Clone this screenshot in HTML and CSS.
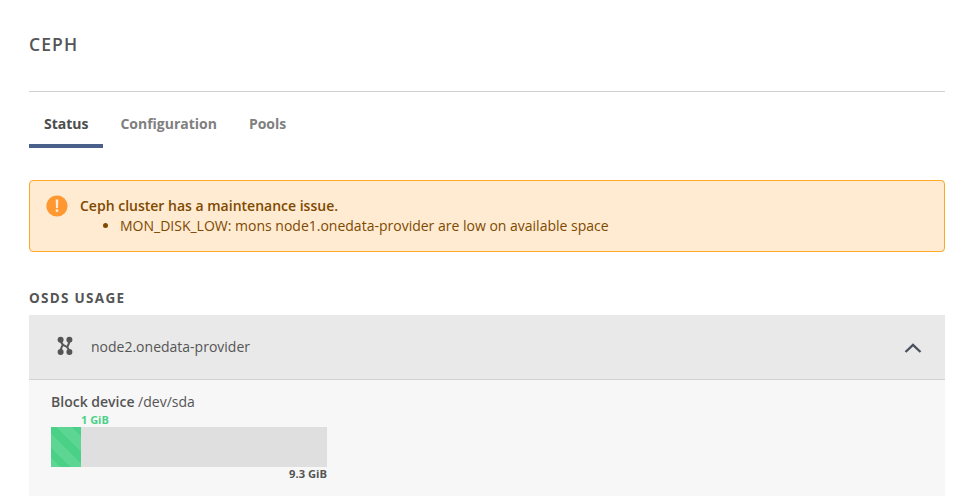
FILE: index.html
```html
<!DOCTYPE html>
<html lang="en">
<head>
<meta charset="utf-8">
<title>Ceph</title>
<link rel="stylesheet" href="styles.css">
</head>
<body>
<main class="page">
  <header class="page-header"><h1>Ceph</h1></header>
  <nav class="tabs">
    <a class="tab active">Status</a>
    <a class="tab">Configuration</a>
    <a class="tab">Pools</a>
  </nav>
  <section class="alert">
    <svg class="alert-icon" viewBox="0 0 22 22"><circle cx="11" cy="11" r="10.6" fill="#ff9830"/><path d="M9.7 4.500h2.600l-.3 8.500h-2z" fill="#feebd2"/><circle cx="11" cy="15.7" r="1.4" fill="#feebd2"/></svg>
    <div class="alert-body">
      <strong>Ceph cluster has a maintenance issue.</strong>
      <ul><li>MON_DISK_LOW: mons node1.onedata-provider are low on available space</li></ul>
    </div>
  </section>
  <h2>OSDs usage</h2>
  <section class="node">
    <header class="node-header">
      <svg class="node-icon" viewBox="0 0 16 20"><g fill="#555"><circle cx="3.6" cy="3.800" r="3"/><circle cx="12.4" cy="3.800" r="3"/><circle cx="3.6" cy="16" r="3"/><circle cx="12.4" cy="16" r="3"/></g><path d="M3.600 4Q4.400 8.600 8 9.900T12.400 16M12.400 4Q12.400 8 10.300 10.800M3.600 16Q3.600 12 5.700 9" fill="none" stroke="#555" stroke-width="2"/></svg>
      <span class="node-name">node2.onedata-provider</span>
      <svg class="chevron" viewBox="0 0 18 12"><path d="M1.5 10 9 2.800l7.500 7.200" fill="none" stroke="#4c505c" stroke-width="2.300"/></svg>
    </header>
    <div class="node-body">
      <div class="device"><b>Block device</b> /dev/sda</div>
      <div class="usage">
        <div class="used-label">1 GiB</div>
        <div class="bar"><div class="used"></div></div>
        <div class="total-label">9.3 GiB</div>
      </div>
    </div>
  </section>
</main>
</body>
</html>
```
FILE: styles.css
```css
* { box-sizing: border-box; }
body { margin: 0; overflow: hidden; background: #fff; color: #555; font: 14px/20px "Open Sans", sans-serif; }
.page { padding: 0 24px 0 29px; }
.page-header { height: 92px; padding-top: 32px; border-bottom: 1px solid #d2d2d2; }
h1 { margin: 0; font-size: 17.5px; line-height: 24px; font-weight: 600; letter-spacing: 1.1px; text-transform: uppercase; }
.tabs { display: flex; gap: 2px; height: 56px; }
.tab { padding: 22px 15px 0; color: #808080; font-weight: 700; letter-spacing: -.01px; }
.tab.active { color: #4c4c4c; border-bottom: 4px solid #48608a; }
.alert { display: flex; height: 72px; margin-top: 32px; padding: 15px 16px; border: 1px solid #ffa726; border-radius: 4px; background: #feebd2; color: #7f4900; }
.alert-icon { width: 22px; height: 22px; margin: -1px 12px 0 0; }
.alert strong { font-weight: 600; }
.alert ul { margin: 0; padding-left: 40px; }
h2 { margin: 36px 0 7px; font-size: 13.5px; line-height: 20px; font-weight: 700; letter-spacing: 1.3px; text-transform: uppercase; }
.node-header { display: flex; align-items: center; height: 65px; padding: 0 23px 0 28px; background: #e9e9e9; border-bottom: 1px solid #d2d2d2; }
.node-icon { width: 16px; height: 20px; margin: -2px 18px 0 0; }
.node-name { flex: 1; }
.chevron { width: 18px; height: 12px; margin-top: 2px; }
.node-body { height: 117px; padding: 12px 22px 0; background: #f7f7f7; }
.device b { font-weight: 600; }
.usage { width: 276px; font-size: 11px; line-height: 15px; font-weight: 700; }
.used-label { height: 15px; padding-left: 30px; color: #4bd187; }
.bar { height: 40px; background: #dfdfdf; }
.used { width: 30px; height: 100%; background: #4bd187 linear-gradient(45deg, rgba(255,255,255,.1) 7px, transparent 7px 13.5px, rgba(255,255,255,.1) 13.5px 24px, transparent 24px 32px, rgba(255,255,255,.1) 32px 43px, transparent 43px); }
.total-label { height: 14px; line-height: 14px; font-size: 11.2px; text-align: right; }
```
